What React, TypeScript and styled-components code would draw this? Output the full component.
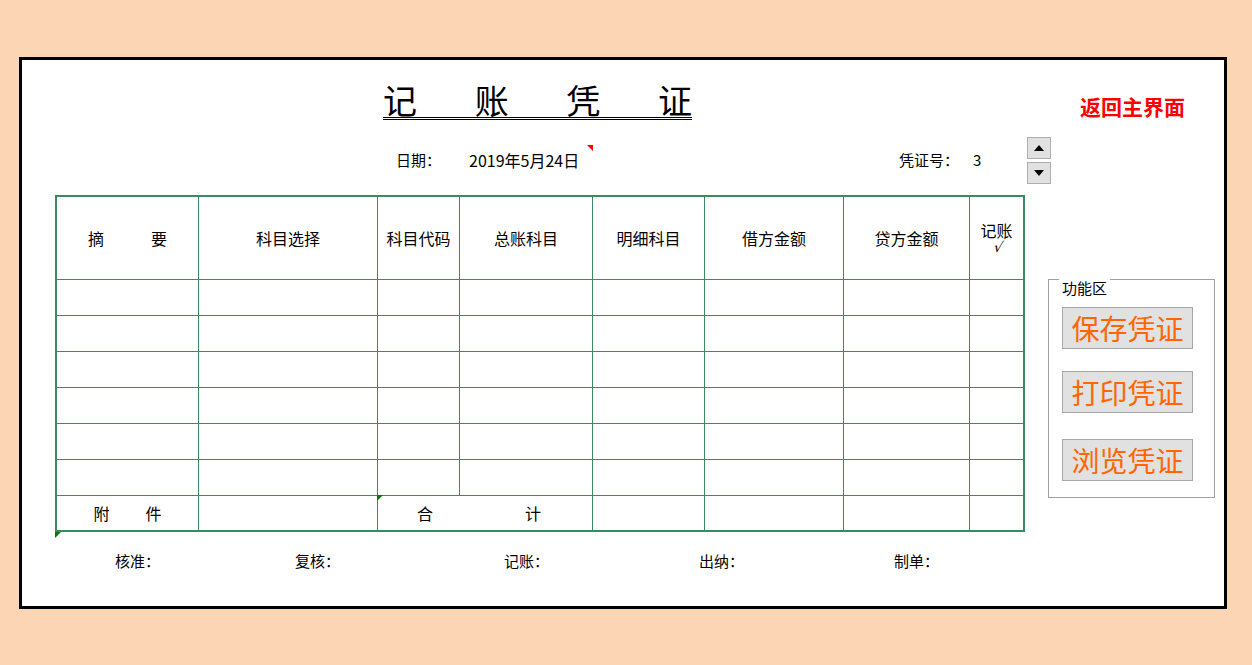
import styled, { createGlobalStyle } from "styled-components";

const GlobalStyle = createGlobalStyle`
  html, body {
    margin: 0;
    padding: 0;
    background: #fcd5b4;
  }
  body {
    font-family: "Noto Sans CJK SC", "Noto Sans", sans-serif;
    color: #000;
  }
`;

const LINE = "#3a8c5e";

const Page = styled.div`
  width: 1252px;
  height: 665px;
  box-sizing: border-box;
  padding: 57px 0 0 19px;
  background: #fcd5b4;
`;

const Frame = styled.div`
  width: 1208px;
  height: 552px;
  box-sizing: border-box;
  border: 3px solid #000;
  background: #fff;
  display: flex;
`;

const Main = styled.div`
  width: 970px;
  margin-left: 33px;
  display: flex;
  flex-direction: column;
`;

const TitleRow = styled.div`
  margin-top: 23px;
  padding-left: 328px;
`;

const Title = styled.h1`
  display: flex;
  justify-content: space-between;
  width: 309px;
  margin: 0;
  font-size: 34px;
  line-height: 34px;
  font-weight: 400;
  border-bottom: 3px double #000;
`;

const InfoRow = styled.div`
  display: grid;
  grid-template-columns: 73px 430px 74px auto;
  margin-top: 30px;
  padding-left: 341px;
  height: 20px;
  font-size: 15px;
  line-height: 20px;
`;

const InfoCell = styled.div<{ $size?: number }>`
  position: relative;
  font-size: ${({ $size }) => $size ?? 15}px;
`;

const Marker = styled.span<{ $color: string; $corner: "tl" | "tr" }>`
  position: absolute;
  width: 0;
  height: 0;
  top: ${({ $corner }) => ($corner === "tr" ? "-5px" : "-1px")};
  ${({ $corner }) => ($corner === "tr" ? "left: 118px;" : "left: -1px;")}
  border-top: 6px solid ${({ $color }) => $color};
  ${({ $corner }) =>
    $corner === "tr"
      ? "border-left: 6px solid transparent;"
      : "border-right: 6px solid transparent;"}
`;

const TableWrap = styled.div`
  position: relative;
  margin-top: 25px;
`;

const Grid = styled.div`
  display: grid;
  grid-template-columns: 142px 179px 82px 133px 112px 139px 126px 53px;
  grid-template-rows: 83px repeat(6, 36px) 34px;
  border: 2px solid ${LINE};
  width: 970px;
  box-sizing: border-box;
`;

const Cell = styled.div<{ $last?: boolean; $bottom?: boolean; $span?: number }>`
  position: relative;
  box-sizing: border-box;
  border-right: ${({ $last }) => ($last ? "none" : `1px solid ${LINE}`)};
  border-bottom: ${({ $bottom }) => ($bottom ? "none" : `1px solid ${LINE}`)};
  grid-column: span ${({ $span }) => $span ?? 1};
  display: flex;
  flex-direction: column;
  align-items: center;
  justify-content: center;
  font-size: 16px;
  line-height: 16px;
`;

const Spread = styled.span<{ $w: number; $shift?: number }>`
  display: inline-flex;
  justify-content: space-between;
  width: ${({ $w }) => $w}px;
  margin-right: ${({ $shift }) => $shift ?? 0}px;
`;

const Check = styled.span`
  display: block;
  margin-top: 2px;
  margin-left: 3px;
  font-family: "DejaVu Sans", sans-serif;
  font-size: 14px;
  line-height: 15px;
  transform: skewX(-12deg);
`;

const TableMarker = styled.span`
  position: absolute;
  left: 0;
  bottom: -6px;
  width: 0;
  height: 0;
  border-top: 6px solid #007a00;
  border-right: 6px solid transparent;
`;

const SignRow = styled.div`
  display: grid;
  grid-template-columns: 180px 209px 195px 195px auto;
  margin-top: 19px;
  padding-left: 60px;
  font-size: 15px;
  line-height: 20px;
`;

const Side = styled.div`
  margin-left: 2px;
  flex: 1;
  display: flex;
  flex-direction: column;
  align-items: flex-start;
`;

const BackLink = styled.a`
  margin: 34px 0 0 53px;
  color: #ff0000;
  font-size: 21px;
  line-height: 24px;
  font-weight: 700;
  text-decoration: none;
  cursor: pointer;
`;

const Spinner = styled.div`
  margin-top: 19px;
  display: flex;
  flex-direction: column;
  gap: 3px;
`;

const SpinButton = styled.button`
  width: 24px;
  height: 22px;
  box-sizing: border-box;
  padding: 0;
  border: 1px solid #adadad;
  background: #e1e1e1;
  display: flex;
  align-items: center;
  justify-content: center;
`;

const GroupBox = styled.div`
  position: relative;
  margin: 95px 0 0 21px;
  width: 167px;
  height: 219px;
  box-sizing: border-box;
  border: 1px solid #a0a0a0;
  padding: 27px 0 0 13px;
  display: flex;
  flex-direction: column;
`;

const GroupLabel = styled.span`
  position: absolute;
  top: -2px;
  left: 10px;
  padding: 0 3px;
  background: #fff;
  font-size: 15px;
  line-height: 19px;
`;

const FuncButton = styled.button<{ $gap: number }>`
  width: 131px;
  height: 42px;
  margin-top: ${({ $gap }) => $gap}px;
  box-sizing: border-box;
  padding: 0;
  border: 1px solid #a8a8a8;
  background: #e1e1e1;
  color: #ff6600;
  font-family: "Noto Sans CJK SC", sans-serif;
  font-size: 28px;
  line-height: 40px;
  cursor: pointer;
`;

const headers = ["科目选择", "科目代码", "总账科目", "明细科目", "借方金额", "贷方金额"];

function Arrow({ up }: { up?: boolean }) {
  return (
    <svg width="10" height="6" viewBox="0 0 10 6">
      <path d={up ? "M0 6 L5 0 L10 6 Z" : "M0 0 L10 0 L5 6 Z"} fill="#000" />
    </svg>
  );
}

export default function App() {
  return (
    <Page>
      <GlobalStyle />
      <Frame>
        <Main>
          <TitleRow>
            <Title>
              <span>记</span>
              <span>账</span>
              <span>凭</span>
              <span>证</span>
            </Title>
          </TitleRow>

          <InfoRow>
            <InfoCell>日期：</InfoCell>
            <InfoCell $size={16}>
              2019年5月24日
              <Marker $color="#ff0000" $corner="tr" />
            </InfoCell>
            <InfoCell>凭证号：</InfoCell>
            <InfoCell>3</InfoCell>
          </InfoRow>

          <TableWrap>
            <Grid>
              <Cell>
                <Spread $w={79}>
                  <span>摘</span>
                  <span>要</span>
                </Spread>
              </Cell>
              {headers.map((h) => (
                <Cell key={h}>{h}</Cell>
              ))}
              <Cell $last>
                <span>记账</span>
                <Check>√</Check>
              </Cell>

              {Array.from({ length: 6 }).map((_, r) =>
                Array.from({ length: 8 }).map((__, c) => (
                  <Cell key={`${r}-${c}`} $last={c === 7} />
                ))
              )}

              <Cell $bottom>
                <Spread $w={68}>
                  <span>附</span>
                  <span>件</span>
                </Spread>
              </Cell>
              <Cell $bottom />
              <Cell $bottom $span={2}>
                <Marker $color="#007a00" $corner="tl" />
                <Spread $w={124} $shift={12}>
                  <span>合</span>
                  <span>计</span>
                </Spread>
              </Cell>
              <Cell $bottom />
              <Cell $bottom />
              <Cell $bottom />
              <Cell $bottom $last />
            </Grid>
            <TableMarker />
          </TableWrap>

          <SignRow>
            <span>核准：</span>
            <span>复核：</span>
            <span>记账：</span>
            <span>出纳：</span>
            <span>制单：</span>
          </SignRow>
        </Main>

        <Side>
          <BackLink>返回主界面</BackLink>
          <Spinner>
            <SpinButton aria-label="上一张">
              <Arrow up />
            </SpinButton>
            <SpinButton aria-label="下一张">
              <Arrow />
            </SpinButton>
          </Spinner>
          <GroupBox>
            <GroupLabel>功能区</GroupLabel>
            <FuncButton $gap={0}>保存凭证</FuncButton>
            <FuncButton $gap={22}>打印凭证</FuncButton>
            <FuncButton $gap={26}>浏览凭证</FuncButton>
          </GroupBox>
        </Side>
      </Frame>
    </Page>
  );
}
